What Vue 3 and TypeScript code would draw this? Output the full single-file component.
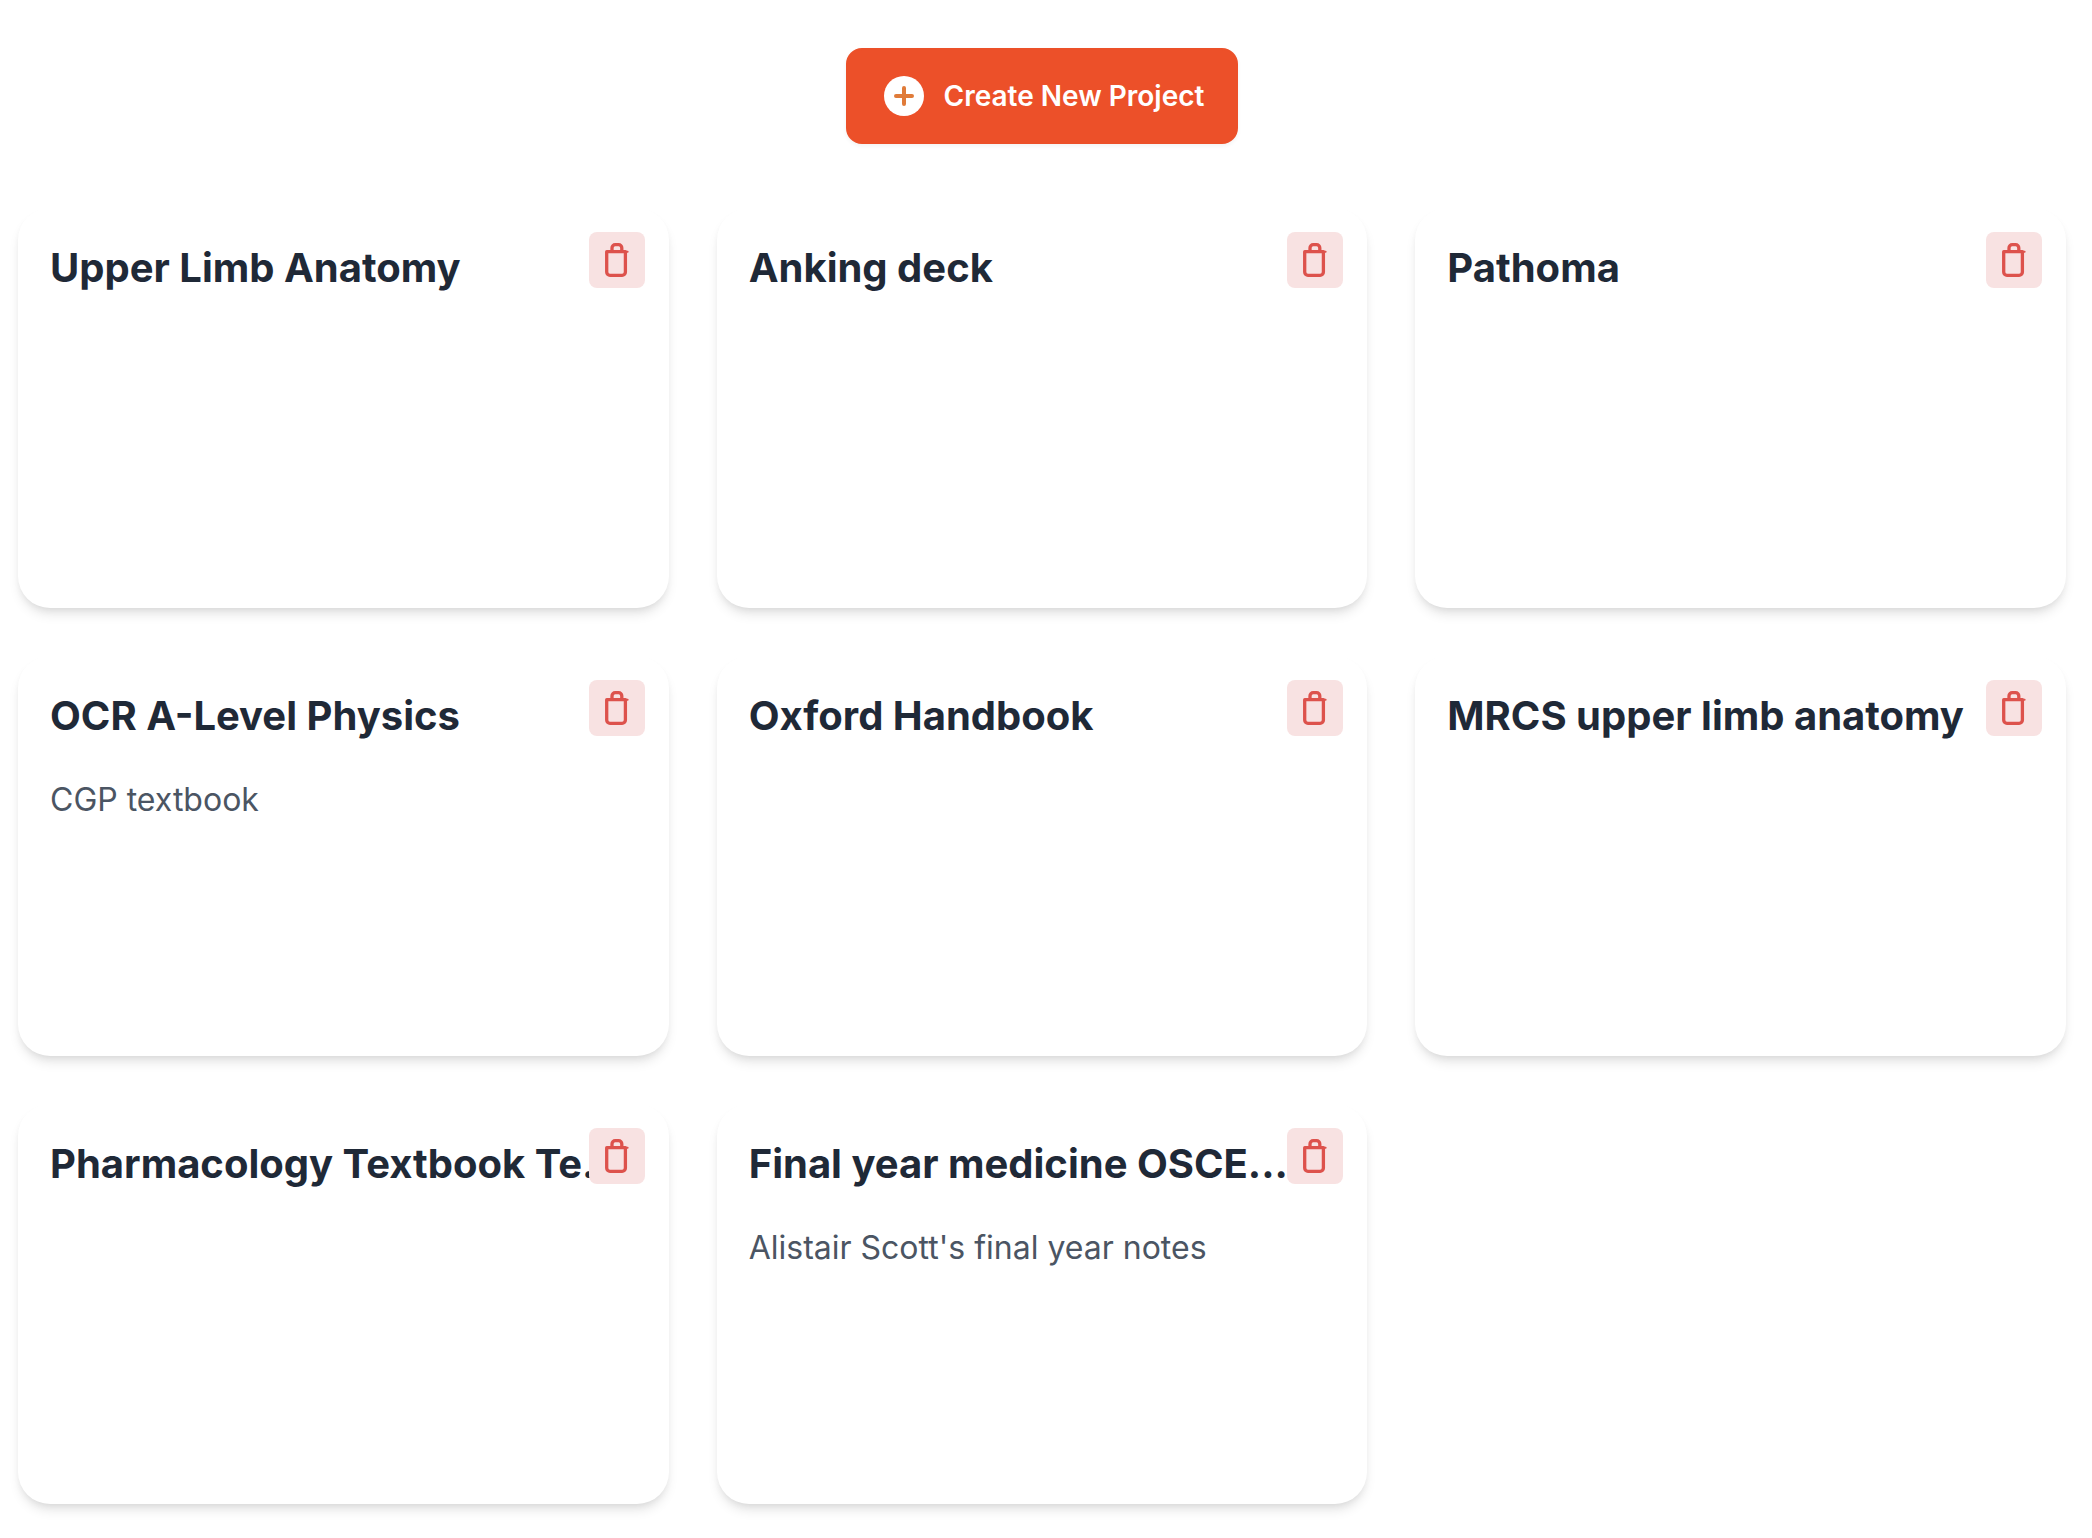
<script setup lang="ts">
import { ref } from 'vue'

interface Project {
  id: number
  title: string
  description?: string
}

const projects = ref<Project[]>([
  { id: 1, title: 'Upper Limb Anatomy' },
  { id: 2, title: 'Anking deck' },
  { id: 3, title: 'Pathoma' },
  { id: 4, title: 'OCR A-Level Physics', description: 'CGP textbook' },
  { id: 5, title: 'Oxford Handbook' },
  { id: 6, title: 'MRCS upper limb anatomy' },
  { id: 7, title: 'Pharmacology Textbook Te...' },
  { id: 8, title: 'Final year medicine OSCE...', description: "Alistair Scott's final year notes" },
])

function removeProject(id: number) {
  projects.value = projects.value.filter((project) => project.id !== id)
}
</script>

<template>
  <main class="page">
    <button class="create" type="button">
      <svg class="create-icon" viewBox="0 0 24 24" aria-hidden="true">
        <circle cx="12" cy="12" r="10" fill="#fff" />
        <path d="M12 8v8M8 12h8" fill="none" stroke="#e07b39" stroke-width="2" stroke-linecap="round" />
      </svg>
      Create New Project
    </button>

    <section class="grid">
      <article v-for="project in projects" :key="project.id" class="card">
        <h2 class="title">{{ project.title }}</h2>
        <p v-if="project.description" class="description">{{ project.description }}</p>
        <button
          class="delete"
          type="button"
          :aria-label="`Delete ${project.title}`"
          @click="removeProject(project.id)"
        >
          <svg class="delete-icon" viewBox="0 0 40 40" aria-hidden="true">
            <path
              d="M9.700 11.700H28.400V32a3.300 3.300 0 0 1-3.300 3.300H13A3.300 3.300 0 0 1 9.700 32ZM15 11.700V7.900a3.200 3.200 0 0 1 3.200-3.200H21.600a3.200 3.200 0 0 1 3.200 3.200V11.700"
            />
            <path class="lid-end" d="M28.400 11.700H30.600" />
          </svg>
        </button>
      </article>
    </section>
  </main>
</template>

<style>
body {
  margin: 0;
  background: #fff;
}
</style>

<style scoped>
.page {
  display: flex;
  flex-direction: column;
  align-items: center;
  gap: 64px;
  padding: 48px 26px 34px 18px;
  font-family: Inter, 'Liberation Sans', sans-serif;
}

.create {
  display: flex;
  align-items: center;
  gap: 16px;
  height: 96px;
  padding: 0 32px;
  border: 2px solid #ec5029;
  border-radius: 16px;
  background: #ec5029;
  color: #fff;
  font: inherit;
  font-size: 28px;
  font-weight: 600;
  line-height: 40px;
  white-space: nowrap;
  box-shadow: 0 2px 4px rgba(0, 0, 0, 0.05);
  cursor: pointer;
}

.create-icon {
  width: 48px;
  height: 48px;
}

.grid {
  display: grid;
  grid-template-columns: repeat(3, minmax(0, 1fr));
  gap: 48px;
  width: 100%;
}

.card {
  position: relative;
  box-sizing: border-box;
  min-height: 400px;
  padding: 32px;
  border-radius: 32px;
  background: #fff;
  box-shadow:
    0 8px 12px -2px rgba(0, 0, 0, 0.1),
    0 4px 8px -4px rgba(0, 0, 0, 0.1);
}

.title {
  margin: 0;
  overflow: hidden;
  color: #1f2937;
  font-size: 40px;
  font-weight: 700;
  line-height: 56px;
  white-space: nowrap;
}

.description {
  margin: 32px 0 0;
  color: #4b5563;
  font-size: 32px;
  line-height: 48px;
}

.delete {
  position: absolute;
  top: 24px;
  right: 24px;
  display: flex;
  padding: 8px;
  border: 0;
  border-radius: 8px;
  background: #f8e2e2;
  cursor: pointer;
}

.delete-icon {
  width: 40px;
  height: 40px;
  fill: none;
  stroke: #dd524c;
  stroke-width: 3.3;
  stroke-linecap: round;
  stroke-linejoin: round;
}

.lid-end {
  stroke-width: 2;
}
</style>
